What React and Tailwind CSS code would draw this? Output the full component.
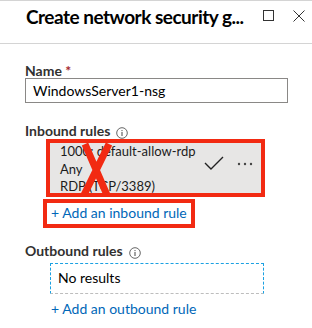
import React from 'react';

// petite icône "info" entourée
function InfoIcon() {
  return (
    <svg width="12" height="12" viewBox="0 0 12 12" className="ml-[6px] mt-[3px] shrink-0">
      <circle cx="6" cy="6" r="5.3" fill="none" stroke="#555" strokeWidth="0.9" />
      <circle cx="6" cy="3.6" r="0.7" fill="#555" />
      <rect x="5.45" y="5" width="1.1" height="4" fill="#555" />
    </svg>
  );
}

export default function App() {
  return (
    <div
      className="w-[312px] h-[328px] bg-white overflow-hidden text-black"
      style={{ fontFamily: 'Lato, "Noto Sans", sans-serif' }}
    >
      {/* En-tête */}
      <div className="h-[44px] border-t border-b border-[#d4d4d4] flex items-start pt-[4px] pl-[26px] pr-[7px]">
        <div className="flex-1 min-w-0 overflow-hidden text-[19px] leading-[24px] font-bold tracking-[-0.5px] whitespace-nowrap">
          Create network security g...
        </div>
        <svg width="11" height="11" viewBox="0 0 11 11" className="shrink-0 mt-[5px] mr-[19px]">
          <rect x="0.5" y="0.5" width="10" height="10" fill="none" stroke="#333" strokeWidth="1" />
        </svg>
        <svg width="12" height="12" viewBox="0 0 12 12" className="shrink-0 mt-[5px]">
          <path d="M0.5 0.5 L11.5 11.5 M11.5 0.5 L0.5 11.5" stroke="#333" strokeWidth="1" />
        </svg>
      </div>

      <div className="pl-[25px] pr-[24px] pt-[20px]">
        {/* Nom */}
        <div className="text-[14px] leading-[14px] font-bold text-[#323130]">
          Name <span className="text-[#a4262c]">*</span>
        </div>
        <div className="h-[25px] border border-[#8a8886] pl-[7px] text-[14px] leading-[23px] whitespace-nowrap">
          WindowsServer1-nsg
        </div>

        {/* Règles entrantes */}
        <div className="mt-[21px] flex items-start text-[14px] leading-[14px] font-bold text-[#323130] whitespace-nowrap">
          Inbound rules
          <InfoIcon />
        </div>
        <div className="relative ml-[21px] mr-[23px] h-[58px] border-[4px] border-[#f22a12] overflow-hidden">
          <div className="h-full bg-[#e7e6e5] pl-[10px] pr-[8px] flex items-start text-[13px] leading-[17.5px] text-[#1b1b1b] whitespace-nowrap">
            <div className="flex-1 min-w-0">
              <div>1000: default-allow-rdp</div>
              <div>Any</div>
              <div>RDP (TCP/3389)</div>
            </div>
            <svg width="20" height="14" viewBox="0 0 20 14" className="shrink-0 mt-[13px] mr-[13px]">
              <path d="M1 7 L7 13 L19 1" fill="none" stroke="#222" strokeWidth="1.4" />
            </svg>
            <svg width="16" height="4" viewBox="0 0 16 4" className="shrink-0 mt-[19px]">
              <circle cx="2" cy="2" r="1.2" fill="#444" />
              <circle cx="8" cy="2" r="1.2" fill="#444" />
              <circle cx="14" cy="2" r="1.2" fill="#444" />
            </svg>
          </div>
          {/* croix rouge par-dessus */}
          <svg width="34" height="52" viewBox="0 0 34 52" className="absolute left-[30px] top-[0px]">
            <path d="M5 1 L27 52 M29 1 L4 52" stroke="#f22a12" strokeWidth="7" />
          </svg>
        </div>
        <div className="mt-[2px] ml-[18px] w-[152px] h-[29px] border-[4px] border-[#f22a12] pl-[4px] text-[14px] leading-[20px] text-[#0067b8] whitespace-nowrap">
          + Add an inbound rule
        </div>

        {/* Règles sortantes */}
        <div className="mt-[16px] flex items-start text-[14px] leading-[14px] font-bold text-[#323130] whitespace-nowrap">
          Outbound rules
          <InfoIcon />
        </div>
        <div className="mt-[4px] ml-[25px] w-[214px] h-[31px] border border-dashed border-[#1ba1e2] border-b-solid border-b-[#bdbdbd] pl-[7px] text-[14px] leading-[28px]">
          No results
        </div>
        <div className="mt-[5px] ml-[26px] text-[14px] leading-[20px] text-[#0067b8] whitespace-nowrap">
          + Add an outbound rule
        </div>
      </div>
    </div>
  );
}
